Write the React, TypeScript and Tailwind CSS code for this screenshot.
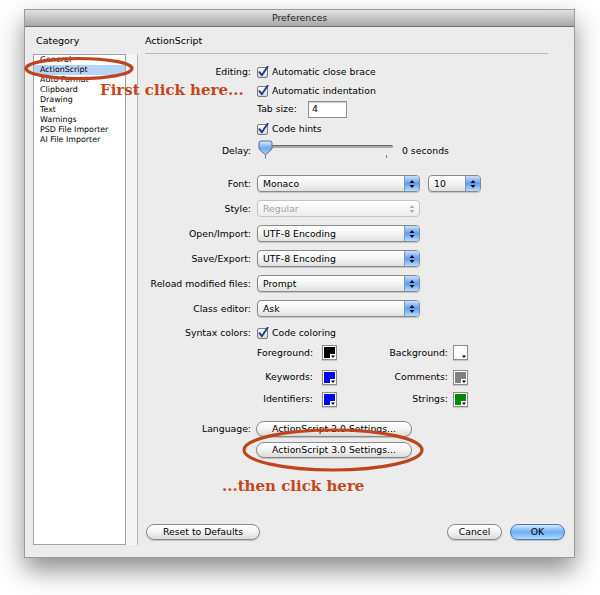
import React from 'react';

const ANNOT = 'text-[#c4461d]';

const Checkbox: React.FC = () => (
  <svg width="12" height="12" viewBox="0 0 12 12" className="shrink-0">
    <defs>
      <linearGradient id="cbfill" x1="0" y1="0" x2="0" y2="1">
        <stop offset="0" stopColor="#ffffff" />
        <stop offset="1" stopColor="#d6d6d6" />
      </linearGradient>
    </defs>
    <rect x="0.5" y="1.5" width="10" height="10" rx="1.5" fill="url(#cbfill)" stroke="#7b7b7b" />
    <path d="M2.4 6.2 L4.8 9.2 L10.6 0.8" fill="none" stroke="#1d3b8e" strokeWidth="1.9" strokeLinecap="round" strokeLinejoin="round" />
  </svg>
);

const Arrows: React.FC<{ color?: string }> = ({ color = '#111' }) => (
  <svg width="6" height="10" viewBox="0 0 6 10">
    <path d="M0.5 4 L3 1 L5.5 4 Z" fill={color} />
    <path d="M0.5 6 L3 9 L5.5 6 Z" fill={color} />
  </svg>
);

const Popup: React.FC<{ value: string; width: string; disabled?: boolean }> = ({ value, width, disabled }) =>
  disabled ? (
    <div className={`flex h-[17px] ${width} items-center rounded-[4px] border border-[#c4c4c4] bg-gradient-to-b from-white to-[#ededed]`}>
      <span className="flex-1 pl-[5px] text-[#a3a3a3]">{value}</span>
      <span className="flex h-full w-[15px] items-center justify-center">
        <Arrows color="#b0b0b0" />
      </span>
    </div>
  ) : (
    <div className={`flex h-[17px] ${width} items-center rounded-[4px] border border-[#8a8a8a] bg-gradient-to-b from-white via-[#f4f4f4] to-[#e0e0e0] shadow-[0_1px_1px_rgba(0,0,0,0.18)]`}>
      <span className="flex-1 pl-[5px]">{value}</span>
      <span className="flex h-full w-[15px] items-center justify-center rounded-r-[3px] border-l border-[#7d94b5] bg-gradient-to-b from-[#c9e1fa] via-[#5e9def] to-[#b9dcfc]">
        <Arrows />
      </span>
    </div>
  );

const Swatch: React.FC<{ color: string }> = ({ color }) => (
  <div className="relative h-[15px] w-[15px] shrink-0 border border-[#8c8c8c] bg-white p-[1px] shadow-[0_1px_1px_rgba(0,0,0,0.15)]">
    <div className="h-full w-full" style={{ background: color }} />
    <svg width="6" height="5" viewBox="0 0 6 5" className="absolute bottom-0 right-0">
      <rect x="0" y="0" width="6" height="5" fill="#fff" />
      <path d="M1 1.5 L5 1.5 L3 4 Z" fill="#000" />
    </svg>
  </div>
);

const Capsule: React.FC<{ label: string; width: string; primary?: boolean }> = ({ label, width, primary }) => (
  <button
    className={`flex h-[16px] ${width} items-center justify-center rounded-full border ${
      primary
        ? 'border-[#4c78b8] bg-gradient-to-b from-[#d3e8fc] via-[#6eaef4] to-[#b1dafc]'
        : 'border-[#8a8a8a] bg-gradient-to-b from-white via-[#f3f3f3] to-[#dadada]'
    } shadow-[0_1px_1px_rgba(0,0,0,0.2)]`}
  >
    {label}
  </button>
);

const Row: React.FC<{ label?: string; h: string; className?: string; children?: React.ReactNode }> = ({ label, h, className = '', children }) => (
  <div className={`flex ${h} items-center ${className}`}>
    <div className="w-[106px] shrink-0 text-right">{label}</div>
    <div className="ml-[6px] flex items-center">{children}</div>
  </div>
);

const ColorPair: React.FC<{ l: string; lc: string; r: string; rc: string; h: string; className?: string }> = ({ l, lc, r, rc, h, className = '' }) => (
  <div className={`flex ${h} items-center pl-[112px] ${className}`}>
    <span className="w-[56px] text-right">{l}</span>
    <span className="ml-[9px]"><Swatch color={lc} /></span>
    <span className="w-[111px] text-right">{r}</span>
    <span className="ml-[5px]"><Swatch color={rc} /></span>
  </div>
);

const categories = ['General', 'ActionScript', 'Auto Format', 'Clipboard', 'Drawing', 'Text', 'Warnings', 'PSD File Importer', 'AI File Importer'];

export default function App() {
  return (
    <div className="relative h-[595px] w-[600px] overflow-hidden bg-white pl-[24px] pt-[9px] font-['DejaVu_Sans',sans-serif] text-[9.3px] leading-[12px] text-black">
      <div className="flex h-[549px] w-[551px] flex-col border border-[#9a9a9a] bg-[#ececec] shadow-[0_12px_24px_rgba(0,0,0,0.45)]">
        {/* title bar */}
        <div className="flex h-[17px] shrink-0 items-center justify-center border-b border-[#6f6f6f] bg-gradient-to-b from-[#e2e2e2] to-[#a7a7a7] text-[9.4px] text-[#1e1e1e]">
          Preferences
        </div>

        <div className="flex flex-1 pb-[12px] pl-[8px] pr-[9px] pt-[7px]">
          {/* category column */}
          <div className="flex w-[105px] shrink-0 flex-col">
            <div className="h-[20px] pl-[3px] text-[9.5px] leading-[14px]">Category</div>
            <div className="flex flex-1">
              <div className="w-[93px] border border-[#a3a3a3] bg-white">
                {categories.map((c) => (
                  <div
                    key={c}
                    className={`h-[10px] pl-[6px] text-[7.9px] leading-[10px] ${c === 'ActionScript' ? 'bg-[#b6d5f8]' : ''}`}
                  >
                    {c}
                  </div>
                ))}
              </div>
              <div className="w-[12px] border-r border-[#b4b4b4] bg-[#f5f5f5]" />
            </div>
          </div>

          {/* settings panel */}
          <div className="ml-[7px] flex flex-1 flex-col">
            <div className="mr-[17px] h-[20px] border-b border-[#b9b9b9] text-[9.5px] leading-[14px]">ActionScript</div>

            <div className="h-[9px]" />
            <Row label="Editing:" h="h-[18px]">
              <Checkbox />
              <span className="ml-[3px]">Automatic close brace</span>
            </Row>
            <Row h="h-[19px]">
              <Checkbox />
              <span className="ml-[3px]">Automatic indentation</span>
            </Row>
            <Row h="h-[18px]">
              <span className="w-[51px]">Tab size:</span>
              <div className="flex h-[17px] w-[39px] items-center border border-[#8f8f8f] bg-white pl-[3px] shadow-[inset_0_1px_1px_rgba(0,0,0,0.2)]">4</div>
            </Row>
            <Row h="h-[22px]">
              <Checkbox />
              <span className="ml-[3px]">Code hints</span>
            </Row>
            <Row label="Delay:" h="h-[21px]">
              <div className="relative h-[21px] w-[141px]">
                <div className="absolute left-[5px] top-[5px] h-[3px] w-[131px] rounded-full border-t border-[#6e6e6e] bg-[#a9a9a9]" />
                <div className="absolute left-[129px] top-[15px] h-[3px] w-px bg-[#7a7a7a]" />
                <svg width="15" height="19" viewBox="0 0 15 19" className="absolute left-px top-0">
                  <defs>
                    <linearGradient id="thumb" x1="0" y1="0" x2="0" y2="1">
                      <stop offset="0" stopColor="#d9ecfd" />
                      <stop offset="0.5" stopColor="#6eaaf0" />
                      <stop offset="1" stopColor="#a9d3fb" />
                    </linearGradient>
                  </defs>
                  <path d="M3 1 H12 Q14 1 14 3 V9 L7.5 15 L1 9 V3 Q1 1 3 1 Z" fill="url(#thumb)" stroke="#566f93" />
                  <rect x="7" y="15" width="1" height="3.5" fill="#7a7a7a" />
                </svg>
              </div>
              <span className="ml-[4px]">0 seconds</span>
            </Row>

            <div className="h-[10px]" />
            <Row label="Font:" h="h-[25px]">
              <Popup value="Monaco" width="w-[163px]" />
              <span className="ml-[8px]"><Popup value="10" width="w-[53px]" /></span>
            </Row>
            <Row label="Style:" h="h-[25px]">
              <Popup value="Regular" width="w-[163px]" disabled />
            </Row>
            <Row label="Open/Import:" h="h-[25px]">
              <Popup value="UTF-8 Encoding" width="w-[163px]" />
            </Row>
            <Row label="Save/Export:" h="h-[25px]">
              <Popup value="UTF-8 Encoding" width="w-[163px]" />
            </Row>
            <Row label="Reload modified files:" h="h-[25px]">
              <Popup value="Prompt" width="w-[163px]" />
            </Row>
            <Row label="Class editor:" h="h-[25px]">
              <Popup value="Ask" width="w-[163px]" />
            </Row>
            <Row label="Syntax colors:" h="h-[20px]" className="mt-[2px]">
              <Checkbox />
              <span className="ml-[3px]">Code coloring</span>
            </Row>
            <ColorPair l="Foreground:" lc="#000000" r="Background:" rc="#ffffff" h="h-[19px]" />
            <ColorPair l="Keywords:" lc="#0000ff" r="Comments:" rc="#808080" h="h-[20px]" className="mt-[5px]" />
            <ColorPair l="Identifiers:" lc="#0000ff" r="Strings:" rc="#008a00" h="h-[20px]" className="mt-[2px]" />

            <Row label="Language:" h="h-[20px]" className="mt-[10px]">
              <span className="-ml-px"><Capsule label="ActionScript 2.0 Settings..." width="w-[156px]" /></span>
            </Row>
            <Row h="h-[20px]" className="mt-px">
              <span className="-ml-px"><Capsule label="ActionScript 3.0 Settings..." width="w-[156px]" /></span>
            </Row>

            <div className="mb-[5px] mt-auto flex items-center pl-px">
              <Capsule label="Reset to Defaults" width="w-[114px]" />
              <div className="flex-1" />
              <Capsule label="Cancel" width="w-[55px]" />
              <span className="ml-[8px]"><Capsule label="OK" width="w-[55px]" primary /></span>
            </div>
          </div>
        </div>
      </div>

      {/* annotations */}
      <svg width="600" height="595" viewBox="0 0 600 595" className="pointer-events-none absolute left-0 top-0">
        <ellipse cx="79" cy="68.5" rx="53" ry="10" fill="none" stroke="#c0441b" strokeWidth="3.2" />
        <ellipse cx="333" cy="450" rx="89" ry="20" fill="none" stroke="#c0441b" strokeWidth="3.2" />
      </svg>
      <div className={`pointer-events-none absolute left-[100px] top-[81px] font-['DejaVu_Serif',serif] text-[15px] font-bold leading-[18px] ${ANNOT}`}>
        First click here...
      </div>
      <div className={`pointer-events-none absolute left-[222px] top-[477px] font-['DejaVu_Serif',serif] text-[15px] font-bold leading-[18px] ${ANNOT}`}>
        ...then click here
      </div>
    </div>
  );
}
